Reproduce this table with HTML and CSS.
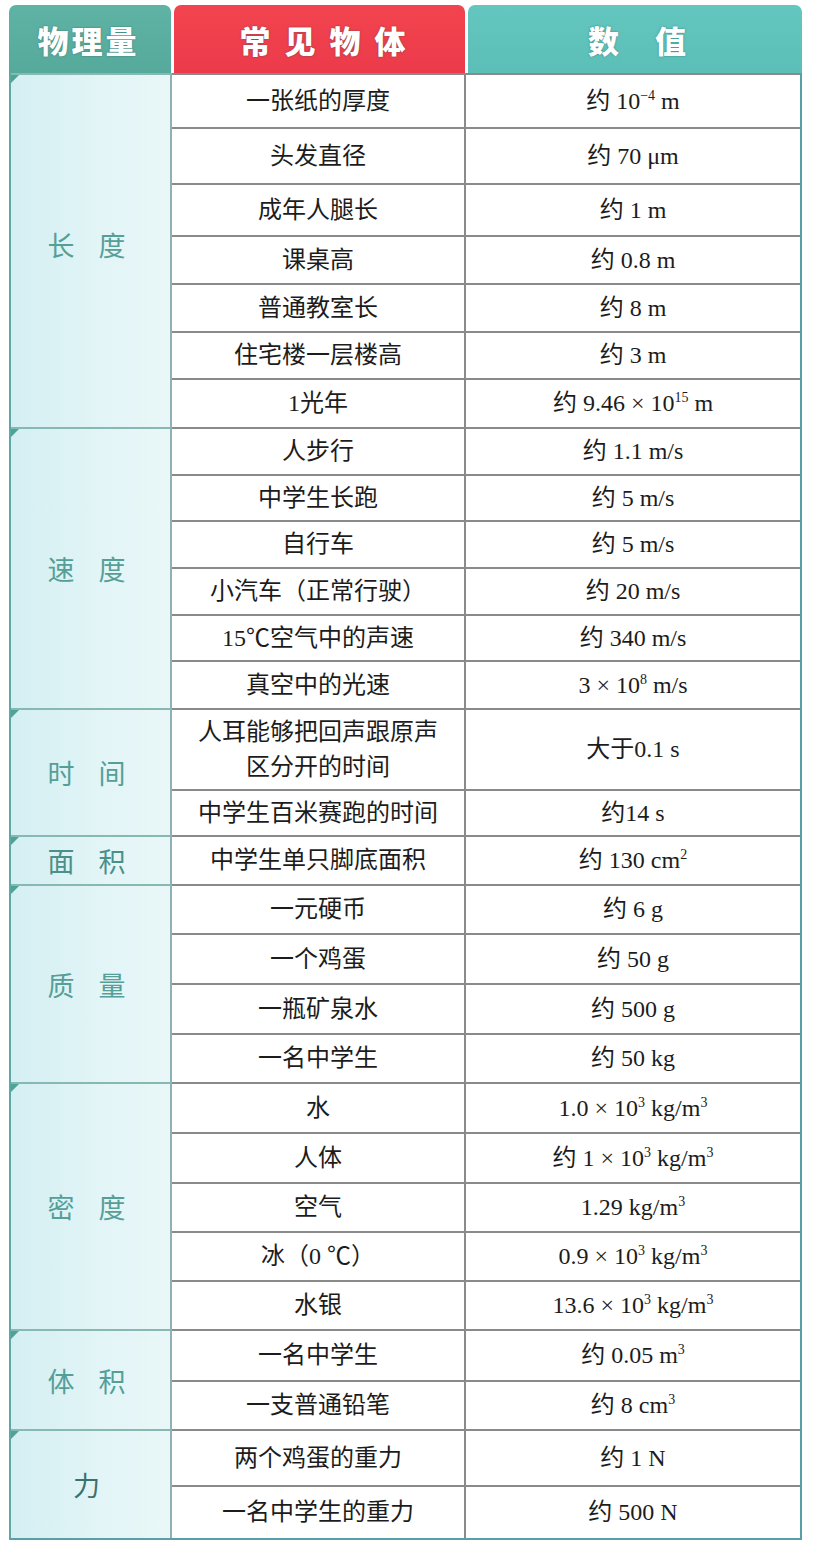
FILE: index.html
```html
<!DOCTYPE html>
<html lang="zh-CN">
<head>
<meta charset="utf-8">
<title>常见物理量</title>
<link rel="stylesheet" href="styles.css">
</head>
<body>
<div class="sheet">
  <div class="head">
    <div class="hcell h-qty"><span class="htext t-qty">物理量</span></div>
    <div class="hcell h-obj"><span class="htext t-obj">常见物体</span></div>
    <div class="hcell h-val"><span class="htext t-val"><span>数</span><span>值</span></span></div>
  </div>
  <div class="body">
    <div class="group">
      <div class="label up"><span>长</span><span>度</span></div>
      <div class="rows">
        <div class="row h54"><div class="obj"><span>一张纸的厚度</span></div><div class="val"><span>约 10<sup>−4</sup> m</span></div></div>
        <div class="row h56"><div class="obj"><span>头发直径</span></div><div class="val"><span>约 70 μm</span></div></div>
        <div class="row h52"><div class="obj"><span>成年人腿长</span></div><div class="val"><span>约 1 m</span></div></div>
        <div class="row h48"><div class="obj"><span>课桌高</span></div><div class="val"><span>约 0.8 m</span></div></div>
        <div class="row h48"><div class="obj"><span>普通教室长</span></div><div class="val"><span>约 8 m</span></div></div>
        <div class="row h47"><div class="obj"><span>住宅楼一层楼高</span></div><div class="val"><span>约 3 m</span></div></div>
        <div class="row h49"><div class="obj"><span>1光年</span></div><div class="val"><span>约 9.46 × 10<sup>15</sup> m</span></div></div>
      </div>
    </div>
    <div class="group">
      <div class="label"><span>速</span><span>度</span></div>
      <div class="rows">
        <div class="row h47"><div class="obj"><span>人步行</span></div><div class="val"><span>约 1.1 m/s</span></div></div>
        <div class="row h46"><div class="obj"><span>中学生长跑</span></div><div class="val"><span>约 5 m/s</span></div></div>
        <div class="row h47"><div class="obj"><span>自行车</span></div><div class="val"><span>约 5 m/s</span></div></div>
        <div class="row h47"><div class="obj"><span>小汽车（正常行驶）</span></div><div class="val"><span>约 20 m/s</span></div></div>
        <div class="row h46"><div class="obj"><span>15℃空气中的声速</span></div><div class="val"><span>约 340 m/s</span></div></div>
        <div class="row h48"><div class="obj"><span>真空中的光速</span></div><div class="val"><span>3 × 10<sup>8</sup> m/s</span></div></div>
      </div>
    </div>
    <div class="group">
      <div class="label"><span>时</span><span>间</span></div>
      <div class="rows">
        <div class="row h81"><div class="obj two"><span>人耳能够把回声跟原声<br>区分开的时间</span></div><div class="val"><span>大于0.1 s</span></div></div>
        <div class="row h46"><div class="obj"><span>中学生百米赛跑的时间</span></div><div class="val"><span>约14 s</span></div></div>
      </div>
    </div>
    <div class="group">
      <div class="label dark"><span>面</span><span>积</span></div>
      <div class="rows">
        <div class="row h49"><div class="obj"><span>中学生单只脚底面积</span></div><div class="val"><span>约 130 cm<sup>2</sup></span></div></div>
      </div>
    </div>
    <div class="group">
      <div class="label"><span>质</span><span>量</span></div>
      <div class="rows">
        <div class="row h49"><div class="obj"><span>一元硬币</span></div><div class="val"><span>约 6 g</span></div></div>
        <div class="row h50"><div class="obj"><span>一个鸡蛋</span></div><div class="val"><span>约 50 g</span></div></div>
        <div class="row h50"><div class="obj"><span>一瓶矿泉水</span></div><div class="val"><span>约 500 g</span></div></div>
        <div class="row h49"><div class="obj"><span>一名中学生</span></div><div class="val"><span>约 50 kg</span></div></div>
      </div>
    </div>
    <div class="group">
      <div class="label"><span>密</span><span>度</span></div>
      <div class="rows">
        <div class="row h50"><div class="obj"><span>水</span></div><div class="val"><span>1.0 × 10<sup>3</sup> kg/m<sup>3</sup></span></div></div>
        <div class="row h50"><div class="obj"><span>人体</span></div><div class="val"><span>约 1 × 10<sup>3</sup> kg/m<sup>3</sup></span></div></div>
        <div class="row h49"><div class="obj"><span>空气</span></div><div class="val"><span>1.29 kg/m<sup>3</sup></span></div></div>
        <div class="row h49"><div class="obj"><span>冰（0 ℃）</span></div><div class="val"><span>0.9 × 10<sup>3</sup> kg/m<sup>3</sup></span></div></div>
        <div class="row h49"><div class="obj"><span>水银</span></div><div class="val"><span>13.6 × 10<sup>3</sup> kg/m<sup>3</sup></span></div></div>
      </div>
    </div>
    <div class="group">
      <div class="label"><span>体</span><span>积</span></div>
      <div class="rows">
        <div class="row h51"><div class="obj"><span>一名中学生</span></div><div class="val"><span>约 0.05 m<sup>3</sup></span></div></div>
        <div class="row h49"><div class="obj"><span>一支普通铅笔</span></div><div class="val"><span>约 8 cm<sup>3</sup></span></div></div>
      </div>
    </div>
    <div class="group">
      <div class="label darker"><span>力</span></div>
      <div class="rows">
        <div class="row h56"><div class="obj"><span>两个鸡蛋的重力</span></div><div class="val"><span>约 1 N</span></div></div>
        <div class="row h53"><div class="obj"><span>一名中学生的重力</span></div><div class="val"><span>约 500 N</span></div></div>
      </div>
    </div>
  </div>
</div>
</body>
</html>
```

FILE: styles.css
```css
html, body {
  margin: 0;
  padding: 0;
  background: #ffffff;
}

body {
  font-family: "Liberation Serif", "Noto Sans CJK SC", serif;
  color: #1c1c1c;
}

.sheet {
  width: 793px;
  margin: 5px 0 0 9px;
}

/* ---------- header ---------- */
.head {
  display: flex;
  gap: 3px;
  height: 68px;
}

.hcell {
  display: flex;
  align-items: center;
  justify-content: center;
  border-radius: 7px 7px 0 0;
  box-sizing: border-box;
}

.h-qty {
  width: 162px;
  background: linear-gradient(180deg, #5fb3a5 0%, #56aa9c 100%);
}

.h-obj {
  width: 291px;
  background: linear-gradient(180deg, #f2444f 0%, #ec3a4a 100%);
}

.h-val {
  flex: 1;
  background: linear-gradient(180deg, #63c6bf 0%, #5bbfb8 100%);
}

.htext {
  font-family: "Noto Sans CJK SC", sans-serif;
  font-weight: 900;
  font-size: 31px;
  color: #ffffff;
  line-height: 1;
  text-shadow: 0 0 2px rgba(20, 70, 70, 0.55);
}

.t-qty {
  letter-spacing: 3px;
  padding-left: 3px;
  margin-right: 6px;
}

.t-obj {
  letter-spacing: 14px;
  padding-left: 14px;
  margin-left: 6px;
}

.t-val {
  display: flex;
  gap: 36px;
  margin-left: 4px;
}

/* ---------- body ---------- */
.body {
  border-left: 2px solid #5ea8a3;
  border-right: 2px solid #5a9ea6;
  border-bottom: 2px solid #5a9ea6;
}

.group {
  display: flex;
}

.label {
  position: relative;
  width: 161px;
  box-sizing: border-box;
  display: flex;
  align-items: center;
  justify-content: center;
  gap: 24px;
  padding-right: 8px;
  background: linear-gradient(90deg, #d4eff2 0%, #e3f5f7 60%, #e9f7f8 100%);
  border-top: 2px solid #86b9b3;
  border-right: 2px solid #8eb2b3;
  font-family: "Noto Sans CJK SC", sans-serif;
  font-size: 27px;
  font-weight: 400;
  color: #559f98;
}

.label.up {
  padding-bottom: 14px;
}

.label::before {
  content: "";
  position: absolute;
  left: 0;
  top: 0;
  border-top: 8px solid #4aa596;
  border-right: 8px solid transparent;
}

.label.dark {
  color: #4b8f89;
}

.label.darker {
  color: #3e716c;
}

.rows {
  flex: 1;
}

.row {
  display: grid;
  grid-template-columns: 294px 1fr;
  box-sizing: border-box;
  border-top: 2px solid #8a8a8a;
}

.row > div {
  display: flex;
  align-items: center;
  justify-content: center;
  text-align: center;
  font-size: 24px;
  line-height: 1.2;
  font-family: "Liberation Serif", "Noto Sans CJK SC", serif;
}

.row > .obj {
  border-right: 2px solid #8a8a8a;
}

.row > .obj.two {
  line-height: 1.45;
}

.row > .val > span {
  white-space: pre;
}

sup {
  font-size: 14px;
  line-height: 0;
  vertical-align: 9px;
}

.h46 { height: 46px; }
.h47 { height: 47px; }
.h48 { height: 48px; }
.h49 { height: 49px; }
.h50 { height: 50px; }
.h51 { height: 51px; }
.h52 { height: 52px; }
.h53 { height: 53px; }
.h54 { height: 54px; }
.h56 { height: 56px; }
.h81 { height: 81px; }
```
